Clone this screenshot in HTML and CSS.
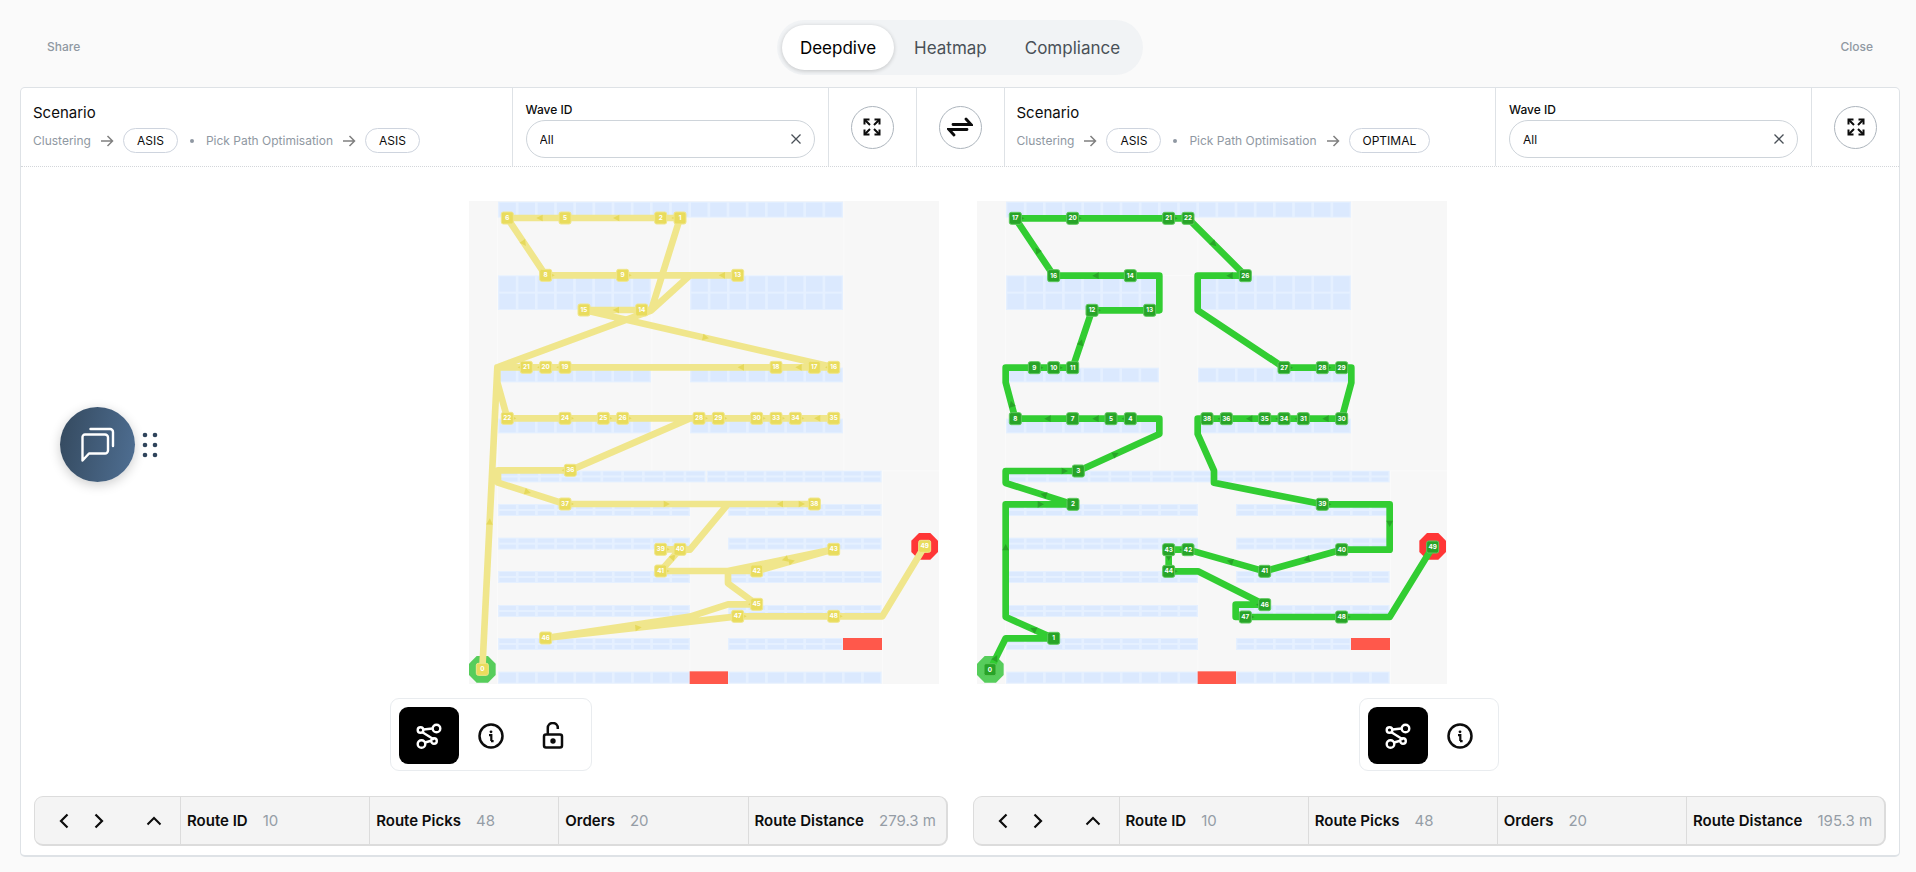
FILE: index.html
```html
<!DOCTYPE html>
<html lang="en">
<head>
<meta charset="utf-8">
<meta name="viewport" content="width=device-width, initial-scale=1">
<title>Deepdive</title>
<link rel="stylesheet" href="styles.css">
</head>
<body>
<svg class="sprite" aria-hidden="true">
  <symbol id="arrow" viewBox="0 0 14 14"><path d="M1 7h11M7.500 2l5 5-5 5" fill="none" stroke="currentColor" stroke-width="1.500"/></symbol>
  <symbol id="expand" viewBox="0 0 20 20">
    <path d="M3 3l5 5M17 3l-5 5M3 17l5-5M17 17l-5-5" stroke="currentColor" stroke-width="2"/>
    <path d="M2.500 7.500v-5h5M12.500 2.500h5v5M2.500 12.500v5h5M12.500 17.500h5v-5" fill="none" stroke="currentColor" stroke-width="2"/>
  </symbol>
  <symbol id="swap" viewBox="0 0 26 20"><path d="M6 7.500h18l-5-5.500M20 12.500H2l5 5.500" fill="none" stroke="currentColor" stroke-width="2.800" stroke-linecap="round" stroke-linejoin="miter"/></symbol>
  <symbol id="cross" viewBox="0 0 12 12"><path d="M1.500 1.500l9 9M10.500 1.500l-9 9" stroke="currentColor" stroke-width="1.300"/></symbol>
  <symbol id="route" viewBox="0 0 28 28">
    <path d="M8.500 7.500l9-1M7 10l12 7.500M10 20.500l7-2" stroke="currentColor" stroke-width="2.400"/>
    <g fill="none" stroke="currentColor" stroke-width="2.400"><circle cx="5.500" cy="8" r="2.800"/><circle cx="21.500" cy="6.500" r="3.800"/><circle cx="19" cy="19" r="2.800"/><circle cx="6.500" cy="22" r="3.800"/></g>
  </symbol>
  <symbol id="info" viewBox="0 0 28 28"><circle cx="14" cy="14" r="11.500" fill="none" stroke="currentColor" stroke-width="2.500"/><circle cx="14" cy="9.800" r="1.400" fill="currentColor"/><path d="M12 13.200h2.300v5.800M14 19.200h2.600" fill="none" stroke="currentColor" stroke-width="2.200"/></symbol>
  <symbol id="unlock" viewBox="0 0 28 28"><rect x="5" y="12.500" width="18" height="13" rx="2" fill="none" stroke="currentColor" stroke-width="2.500"/><path d="M8.800 12V6a5 5 0 0 1 10 0v1" fill="none" stroke="currentColor" stroke-width="2.500"/><circle cx="14" cy="19" r="2.700" fill="currentColor"/></symbol>
  <symbol id="chev-left" viewBox="0 0 18 18"><path d="M12.500 2.500L6 9l6.500 6.500" fill="none" stroke="currentColor" stroke-width="2.200"/></symbol>
  <symbol id="chev-right" viewBox="0 0 18 18"><path d="M5.500 2.500L12 9l-6.500 6.500" fill="none" stroke="currentColor" stroke-width="2.200"/></symbol>
  <symbol id="chev-up" viewBox="0 0 18 18"><path d="M2.500 12.500L9 6l6.500 6.500" fill="none" stroke="currentColor" stroke-width="2"/></symbol>
</svg>

<header class="topbar">
  <button class="text-button" type="button">Share</button>
  <nav class="tabs" aria-label="Views">
    <button class="tab tab-active" type="button">Deepdive</button>
    <button class="tab" type="button">Heatmap</button>
    <button class="tab" type="button">Compliance</button>
  </nav>
  <button class="text-button text-button-end" type="button">Close</button>
</header>

<main class="panel">
  <div class="filters">
    <section class="scenario">
      <h2 class="scenario-title">Scenario</h2>
      <div class="steps">
        <span>Clustering</span><svg class="arrow"><use href="#arrow"/></svg><span class="pill">ASIS</span>
        <span class="dot"></span>
        <span>Pick Path Optimisation</span><svg class="arrow"><use href="#arrow"/></svg><span class="pill">ASIS</span>
      </div>
    </section>
    <div class="wave">
      <label class="wave-label" for="wave-left">Wave ID</label>
      <div class="wave-box"><input class="wave-input" id="wave-left" type="text" value="All"><button class="clear" type="button" aria-label="Clear"><svg class="icon-12"><use href="#cross"/></svg></button></div>
    </div>
    <div class="action"><button class="round" type="button" aria-label="Expand"><svg class="icon-20"><use href="#expand"/></svg></button></div>
    <div class="action"><button class="round" type="button" aria-label="Swap"><svg class="icon-swap"><use href="#swap"/></svg></button></div>
    <section class="scenario scenario-next">
      <h2 class="scenario-title">Scenario</h2>
      <div class="steps">
        <span>Clustering</span><svg class="arrow"><use href="#arrow"/></svg><span class="pill">ASIS</span>
        <span class="dot"></span>
        <span>Pick Path Optimisation</span><svg class="arrow"><use href="#arrow"/></svg><span class="pill">OPTIMAL</span>
      </div>
    </section>
    <div class="wave">
      <label class="wave-label" for="wave-right">Wave ID</label>
      <div class="wave-box"><input class="wave-input" id="wave-right" type="text" value="All"><button class="clear" type="button" aria-label="Clear"><svg class="icon-12"><use href="#cross"/></svg></button></div>
    </div>
    <div class="action"><button class="round" type="button" aria-label="Expand"><svg class="icon-20"><use href="#expand"/></svg></button></div>
  </div>

  <div class="maps">
    <svg class="map map-asis" id="map-asis" viewBox="0 0 1410 1449" role="img" aria-label="ASIS route"></svg>
    <svg class="map map-optimal" id="map-optimal" viewBox="0 0 1410 1449" role="img" aria-label="OPTIMAL route"></svg>
  </div>

  <div class="columns">
    <section class="column">
      <div class="tools">
        <button class="tool tool-active" type="button" aria-label="Route"><svg class="icon-28"><use href="#route"/></svg></button>
        <button class="tool" type="button" aria-label="Info"><svg class="icon-28"><use href="#info"/></svg></button>
        <button class="tool" type="button" aria-label="Unlock"><svg class="icon-28"><use href="#unlock"/></svg></button>
      </div>
      <div class="stats">
        <div class="stats-nav">
          <button class="nav" type="button" aria-label="Previous"><svg class="icon-18"><use href="#chev-left"/></svg></button>
          <button class="nav" type="button" aria-label="Next"><svg class="icon-18"><use href="#chev-right"/></svg></button>
          <button class="nav nav-up" type="button" aria-label="Open"><svg class="icon-18"><use href="#chev-up"/></svg></button>
        </div>
        <div class="stat"><b>Route ID</b><span>10</span></div>
        <div class="stat"><b>Route Picks</b><span>48</span></div>
        <div class="stat"><b>Orders</b><span>20</span></div>
        <div class="stat"><b>Route Distance</b><span>279.3 m</span></div>
      </div>
    </section>
    <section class="column">
      <div class="tools">
        <button class="tool tool-active" type="button" aria-label="Route"><svg class="icon-28"><use href="#route"/></svg></button>
        <button class="tool" type="button" aria-label="Info"><svg class="icon-28"><use href="#info"/></svg></button>
      </div>
      <div class="stats">
        <div class="stats-nav">
          <button class="nav" type="button" aria-label="Previous"><svg class="icon-18"><use href="#chev-left"/></svg></button>
          <button class="nav" type="button" aria-label="Next"><svg class="icon-18"><use href="#chev-right"/></svg></button>
          <button class="nav nav-up" type="button" aria-label="Open"><svg class="icon-18"><use href="#chev-up"/></svg></button>
        </div>
        <div class="stat"><b>Route ID</b><span>10</span></div>
        <div class="stat"><b>Route Picks</b><span>48</span></div>
        <div class="stat"><b>Orders</b><span>20</span></div>
        <div class="stat"><b>Route Distance</b><span>195.3 m</span></div>
      </div>
    </section>
  </div>
</main>

<div class="chat">
  <button class="chat-button" type="button" aria-label="Chat">
    <svg class="chat-icon" viewBox="0 0 36 36" fill="none" stroke="currentColor" stroke-width="2.400" stroke-linecap="round" stroke-linejoin="round"><path d="M2.500 33.500V10a2.500 2.500 0 0 1 2.500-2.500h20a3 3 0 0 1 3 3V23.500a3 3 0 0 1-3 3H9z"/><path d="M10.500 2H30a3 3 0 0 1 3 3v14"/></svg>
  </button>
  <svg class="grip" viewBox="0 0 16 26" fill="currentColor"><circle cx="3" cy="3" r="2.300"/><circle cx="13" cy="3" r="2.300"/><circle cx="3" cy="13" r="2.300"/><circle cx="13" cy="13" r="2.300"/><circle cx="3" cy="23" r="2.300"/><circle cx="13" cy="23" r="2.300"/></svg>
</div>
<script src="map.js"></script>
</body>
</html>
```
FILE: styles.css
```css
* { box-sizing: border-box; }
body {
  margin: 0;
  min-height: 100vh;
  padding: 20px 16px 15px 20px;
  display: flex;
  flex-direction: column;
  gap: 12px;
  background: #fafafa;
  color: #0c0c0c;
  font-family: Inter, "Liberation Sans", sans-serif;
  font-size: 12px;
}
button, input { font: inherit; color: inherit; }
button { border: 0; padding: 0; background: none; cursor: pointer; }
svg { display: block; flex: none; }
.sprite { position: absolute; width: 0; height: 0; }

.topbar { display: grid; grid-template-columns: 1fr auto 1fr; align-items: center; }
.text-button { justify-self: start; padding: 7px 27px 9px; color: #8f98a2; font-weight: 500; }
.text-button-end { justify-self: end; }
.tabs { display: flex; gap: 2px; padding: 5px; border-radius: 28px; background: #f1f3f5; }
.tab { height: 45px; padding: 0 18px; border-radius: 23px; color: #495057; font-size: 17px; }
.tab-active { background: #fff; color: #000; box-shadow: 0 1px 4px rgba(0, 0, 0, 0.2); }

.panel {
  flex: 1;
  display: flex;
  flex-direction: column;
  border: 1px solid #dee2e6;
  border-bottom-width: 2px;
  border-radius: 5px;
  background: #fff;
}
.filters { display: flex; border-bottom: 1px dotted #d3d6da; }
.scenario { flex: 1; padding: 15px 12px 13px; }
.scenario-title { margin: 0 0 5px; font-size: 15px; font-weight: 400; line-height: 20px; }
.steps { display: flex; align-items: center; gap: 9px; color: #8f98a2; white-space: nowrap; }
.arrow { width: 14px; height: 14px; color: #808080; }
.pill { height: 25px; padding: 0 13px; border: 1px solid #ced4de; border-radius: 13px; color: #0c0c0c; line-height: 23px; }
.dot { width: 4px; height: 4px; margin: 0 3px; border-radius: 2px; background: #8f98a2; }
.scenario-next, .wave, .action { border-left: 1px solid #dee2e6; }
.wave { width: 316px; padding: 14px 13px 8px; }
.wave-label { display: block; margin-bottom: 2px; font-weight: 500; line-height: 16px; }
.wave-box { display: flex; align-items: center; height: 38px; padding: 0 12px 0 13px; border: 1px solid #ced4da; border-radius: 19px; }
.wave-input { flex: 1; min-width: 0; padding: 0; border: 0; outline: 0; background: none; }
.clear { color: #495057; }
.action { display: flex; align-items: center; justify-content: center; width: 88px; }
.round { display: flex; align-items: center; justify-content: center; width: 43px; height: 43px; border: 1px solid #adb5bd; border-radius: 50%; }
.icon-12 { width: 12px; height: 12px; }
.icon-18 { width: 18px; height: 18px; }
.icon-20 { width: 20px; height: 20px; }
.icon-28 { width: 28px; height: 28px; }
.icon-swap { width: 26px; height: 20px; }

.maps { flex: 1; display: flex; justify-content: center; gap: 38px; padding: 34px 4px 14px 0; }
.map { width: 470px; height: 483px; }
.map-floor { fill: #f7f7f7; }
.map-line { fill: none; stroke: #fafafa; stroke-width: 3; }
.map-shelf { fill: #e5f0ff; }
.map-cell { fill: #dbe9fe; }
.map-blocked { fill: #ff584b; }
.map-start { fill: #56cd5b; }
.map-end { fill: #ff3636; }
.map-route { fill: none; stroke-width: 20; stroke-linejoin: round; }
.map-stop { stroke-width: 3; }
.map-label { fill: #fff; font-size: 19px; font-weight: 700; text-anchor: middle; }
.map-asis .map-route { stroke: #f0e68c; }
.map-asis .map-arrow { fill: #e6d95c; }
.map-asis .map-stop { fill: #e9dc5d; stroke: #f0e68c; }
.map-optimal .map-route { stroke: #32cd32; }
.map-optimal .map-arrow { fill: #28a428; }
.map-optimal .map-stop { fill: #28a428; stroke: #5cc95c; }

.columns { display: grid; grid-template-columns: 1fr 1fr; gap: 25px; padding: 0 13px 9px; }
.column { display: flex; flex-direction: column; align-items: center; gap: 25px; }
.tools { display: flex; gap: 2px; padding: 8px 8px 6px; border: 1px solid #e9ecef; border-radius: 9px; }
.tool { display: flex; align-items: center; justify-content: center; width: 60px; height: 57px; border-radius: 9px; }
.tool-active { background: #000; color: #fff; }
.stats {
  align-self: stretch;
  display: grid;
  grid-template-columns: 145px 1fr 1fr 1fr 198px;
  height: 50px;
  border: 1px solid #dcdcdc;
  border-bottom-width: 2px;
  border-right-width: 2px;
  border-radius: 9px;
  background: #f4f4f4;
}
.stats-nav { display: flex; align-items: center; padding-left: 20px; gap: 17px; }
.nav-up { margin-left: 20px; }
.stat { display: flex; align-items: center; gap: 15px; padding-left: 6px; border-left: 1px solid #dcdcdc; font-size: 15px; white-space: nowrap; }
.stat b { font-weight: 600; }
.stat span { color: #959da6; }

.chat { position: fixed; left: 60px; top: 407px; display: flex; align-items: center; gap: 7px; color: #2f445b; }
.chat-button {
  display: flex;
  align-items: center;
  justify-content: center;
  width: 75px;
  height: 75px;
  border-radius: 50%;
  background: linear-gradient(100deg, #34495e, #4f6f93);
  color: #fff;
  box-shadow: 0 3px 12px rgba(0, 0, 0, 0.2);
}
.chat-icon { width: 36px; height: 36px; }
.grip { width: 16px; height: 26px; }
```
FILE: map.js
```js
const NS = 'http://www.w3.org/2000/svg';

function add(parent, tag, cls, attrs, text) {
  const el = document.createElementNS(NS, tag);
  el.setAttribute('class', cls);
  for (const key in attrs) el.setAttribute(key, attrs[key]);
  if (text !== undefined) el.textContent = text;
  parent.appendChild(el);
}

// Shelves: x, y, width, height, columns, rows
const shelves = [
  [87, 2, 1035, 48, 18, 1],
  [87, 223, 459, 104, 8, 2], [663, 223, 459, 104, 8, 2],
  [87, 500, 459, 44, 8, 1], [663, 500, 459, 44, 8, 1],
  [87, 653, 459, 44, 8, 1], [663, 653, 459, 44, 8, 1],
  [87, 809, 623, 35, 10, 2], [713, 809, 525, 35, 9, 2],
  [87, 1311, 576, 36, 10, 2], [777, 1311, 345, 36, 6, 2],
  [87, 1412, 576, 36, 10, 1], [777, 1412, 461, 36, 8, 1]
];
for (const y of [909, 1010, 1110, 1212]) {
  shelves.push([87, y, 576, 36, 10, 2], [777, y, 461, 36, 8, 2]);
}

function octagon(cx, cy) {
  const r = 40, k = 17;
  return [[-k, -r], [k, -r], [r, -k], [r, k], [k, r], [-k, r], [-r, k], [-r, -k]]
    .map(([x, y]) => (cx + x) + ',' + (cy + y)).join(' ');
}

// A route point is [x, y] for a bend or [x, y, label] for a stop.
function draw(id, route, arrows) {
  const map = document.getElementById(id);
  add(map, 'rect', 'map-floor', { width: 1410, height: 1449 });
  add(map, 'path', 'map-line', { d: 'M85 50V1449M548 327V809M662 50V1449M1124 0V809H1410M1240 809V1449M1124 223H548' });
  for (const [x, y, w, h, cols, rows] of shelves) {
    add(map, 'rect', 'map-shelf', { x, y, width: w, height: h });
    const cw = w / cols, ch = h / rows, gap = 3;
    for (let c = 0; c < cols; c++) {
      for (let r = 0; r < rows; r++) {
        add(map, 'rect', 'map-cell', { x: x + c * cw + 4, y: y + r * ch + gap, width: cw - 8, height: ch - gap * 2 });
      }
    }
  }
  add(map, 'rect', 'map-blocked', { x: 1122, y: 1311, width: 117, height: 36 });
  add(map, 'rect', 'map-blocked', { x: 662, y: 1411, width: 115, height: 38 });
  add(map, 'polygon', 'map-start', { points: octagon(40, 1405) });
  add(map, 'polygon', 'map-end', { points: octagon(1367, 1036) });
  add(map, 'polyline', 'map-route', { points: route.map(p => p[0] + ',' + p[1]).join(' ') });
  for (const [x, y, angle] of arrows) {
    add(map, 'path', 'map-arrow', { d: 'M-9 -10L10 0L-9 10Z', transform: `translate(${x} ${y}) rotate(${angle})` });
  }
  for (const [x, y, label] of route) {
    if (label === undefined) continue;
    add(map, 'rect', 'map-stop', { x: x - 18, y: y - 18, width: 36, height: 36, rx: 6 });
    add(map, 'text', 'map-label', { x, y: y + 6 }, label);
  }
}

draw('map-asis', [
  [40, 1405, 0], [85, 499], [546, 329], [633, 51, 1], [575, 51, 2], [288, 51, 5], [115, 51, 6],
  [230, 223, 8], [461, 223, 9], [806, 223, 13], [663, 223], [548, 327], [518, 327, 14], [345, 327, 15],
  [1094, 499, 16], [1036, 499, 17], [921, 499, 18], [288, 499, 19], [230, 499, 20], [172, 499, 21],
  [85, 499], [85, 544], [115, 652, 22], [288, 652, 24], [403, 652, 25], [461, 652, 26], [690, 652, 28],
  [748, 652, 29], [863, 652, 30], [921, 652, 33], [979, 652, 34], [1094, 652, 35], [663, 652],
  [304, 808, 36], [87, 808], [87, 845], [288, 909, 37], [1036, 909, 38], [777, 909], [663, 1046],
  [633, 1045, 40], [575, 1045, 39], [633, 1045], [575, 1110, 41], [863, 1110, 42], [1094, 1045, 43],
  [777, 1110], [777, 1147], [863, 1210, 45], [777, 1210], [663, 1247], [230, 1311, 46],
  [806, 1246, 47], [1094, 1246, 48], [1240, 1246], [1367, 1036, 49]
], [
  [212, 51, 180], [442, 51, 180], [617, 51, 180], [165, 127, 56], [247, 223, 0], [478, 223, 0],
  [759, 223, 180], [441, 327, 180], [710, 410, 12], [816, 499, 180], [989, 499, 180], [1078, 499, 180],
  [156, 499, 180], [214, 499, 180], [272, 499, 180], [132, 652, 0], [305, 652, 0], [420, 652, 0],
  [478, 652, 0], [707, 652, 0], [765, 652, 0], [880, 652, 0], [938, 652, 0], [996, 652, 0],
  [1045, 652, 180], [288, 808, 180], [176, 873, 17], [305, 909, 0], [593, 909, 0], [933, 909, 180],
  [998, 909, 0], [62, 962, 273], [592, 1045, 0], [613, 1067, 312], [592, 1110, 0], [948, 1075, 164],
  [968, 1081, 344], [847, 1210, 180], [508, 1280, 354], [823, 1246, 0], [1111, 1246, 0]
]);

draw('map-optimal', [
  [39, 1406, 0], [86, 1312], [230, 1312, 1], [86, 1248], [86, 910], [288, 910, 2], [86, 846], [86, 810],
  [304, 810, 3], [547, 699], [547, 653], [460, 653, 4], [402, 653, 5], [287, 653, 7], [115, 653, 8],
  [86, 544], [86, 500], [172, 500, 9], [230, 500, 10], [287, 500, 11], [345, 328, 12], [518, 328, 13],
  [547, 328], [547, 224], [460, 224, 14], [230, 224, 16], [115, 52, 17], [287, 52, 20], [575, 52, 21],
  [633, 52, 22], [805, 224, 26], [662, 224], [662, 328], [921, 500, 27], [1036, 500, 28],
  [1094, 500, 29], [1123, 500], [1123, 545], [1094, 653, 30], [979, 653, 31], [921, 653, 34],
  [863, 653, 35], [748, 653, 36], [690, 653, 38], [662, 653], [662, 699], [711, 809], [711, 845],
  [1036, 910, 39], [1238, 910], [1238, 1046], [1094, 1046, 40], [863, 1111, 41], [633, 1046, 42],
  [575, 1046, 43], [575, 1111, 44], [663, 1111], [863, 1211, 46], [776, 1211], [776, 1248],
  [805, 1248, 47], [1094, 1248, 48], [1238, 1248], [1367, 1038, 49]
], [
  [56, 1371, 297], [169, 1285, 204], [86, 1039, 270], [191, 910, 0], [200, 881, 197], [263, 810, 0],
  [416, 760, 335], [444, 653, 180], [356, 653, 180], [212, 653, 180], [104, 609, 256], [189, 500, 0],
  [247, 500, 0], [312, 424, 288], [362, 328, 0], [356, 224, 180], [181, 148, 236], [132, 52, 0],
  [304, 52, 0], [592, 52, 0], [711, 129, 45], [758, 224, 180], [938, 500, 0], [1053, 500, 0],
  [1046, 653, 180], [963, 653, 180], [905, 653, 180], [817, 653, 180], [732, 653, 180],
  [1053, 910, 0], [1238, 968, 90], [989, 1075, 164], [759, 1081, 196], [617, 1046, 180],
  [575, 1070, 90], [592, 1111, 0], [847, 1211, 180], [822, 1248, 0], [1111, 1248, 0]
]);
```
